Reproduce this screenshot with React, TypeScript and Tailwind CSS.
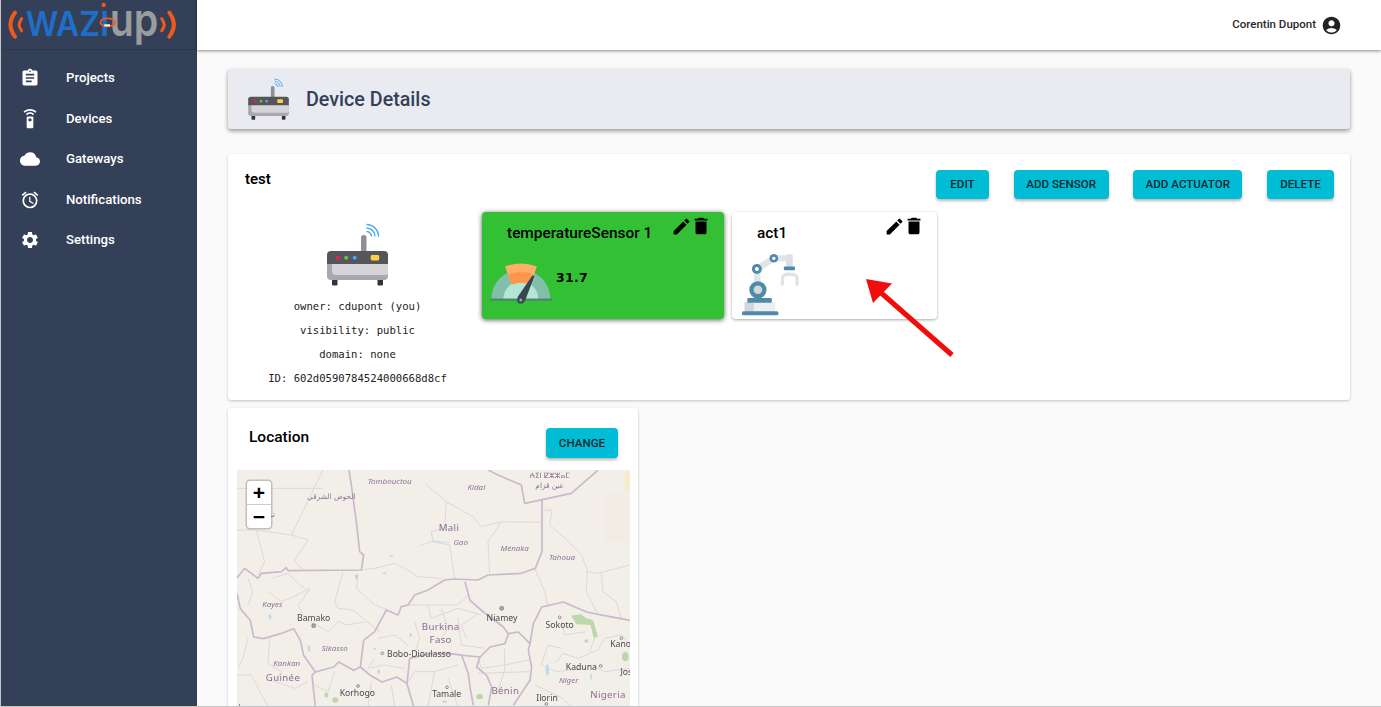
import { MdAssignment, MdSettingsRemote, MdCloud, MdAccessAlarm, MdSettings, MdAccountCircle, MdEdit, MdDelete } from "react-icons/md";

const nav = [
  { label: "Projects", Icon: MdAssignment },
  { label: "Devices", Icon: MdSettingsRemote },
  { label: "Gateways", Icon: MdCloud },
  { label: "Notifications", Icon: MdAccessAlarm },
  { label: "Settings", Icon: MdSettings },
];

function Logo() {
  return (
    <svg viewBox="0 0 540 150" width={180} height={50}>
      <g fill="none" stroke="#f0591c" strokeLinecap="round">
        <path d="M42 38C24 62 24 86 42 110" strokeWidth="12" />
        <path d="M62 56C52 68 52 80 62 92" strokeWidth="9" />
        <path d="M482 56C492 68 492 80 482 92" strokeWidth="9" />
        <path d="M505 38C523 62 523 86 505 110" strokeWidth="12" />
      </g>
      <text x="74" y="109" fontFamily="Inter, sans-serif" fontSize="103" fontWeight="600" fill="#1f6ec8" textLength="250" lengthAdjust="spacingAndGlyphs">WAZI</text>
      <text x="326" y="109" fontFamily="Inter, sans-serif" fontSize="136" fontWeight="600" fill="#9a9c9e" textLength="146" lengthAdjust="spacingAndGlyphs">up</text>
      <ellipse cx="320" cy="67" rx="22" ry="12" fill="none" stroke="#f0591c" strokeWidth="5" />
      <circle cx="308" cy="15" r="6.5" fill="#f0591c" />
      <rect x="310" y="73" width="17" height="6" fill="#fff" />
    </svg>
  );
}

function Router({ w, h }: { w: number; h: number }) {
  return (
    <svg viewBox="0 0 61 63" width={w} height={h}>
      <g fill="none" stroke="#4ea6ee" strokeWidth="1.4">
        <path d="M39.5 8.5A5 5 0 0 1 44.5 13.5" />
        <path d="M39.5 5A8.5 8.5 0 0 1 48 13.5" />
        <path d="M39.5 1.5A12 12 0 0 1 51.5 13.5" />
      </g>
      <rect x="34" y="12" width="5.5" height="18" rx="2.5" fill="#8f8f96" />
      <rect x="5" y="54" width="5.5" height="8.5" rx="1" fill="#33343a" />
      <rect x="50.5" y="54" width="5.5" height="8.5" rx="1" fill="#33343a" />
      <path d="M0 40H61V53a4 4 0 0 1-4 4H4a4 4 0 0 1-4-4Z" fill="#a8a8ae" />
      <path d="M5 40H61V50a2 2 0 0 1-2 2H9a4 4 0 0 1-4-4Z" fill="#d5d4d9" />
      <path d="M4 28H57a4 4 0 0 1 4 4V41H0V32a4 4 0 0 1 4-4Z" fill="#55555c" />
      <circle cx="10.7" cy="34.7" r="2" fill="#f0204a" />
      <circle cx="19.2" cy="34.7" r="2" fill="#6cc13c" />
      <circle cx="27.7" cy="34.7" r="2" fill="#4ea6ee" />
      <rect x="43.7" y="32" width="8.5" height="5.4" rx="1.4" fill="#ffd23e" />
    </svg>
  );
}

function Gauge() {
  return (
    <svg viewBox="30 58 185 122" width={62} height={41}>
      <path d="M34 165A88 88 0 0 1 210 165Z" fill="#82bfa9" />
      <path d="M70 165A52 52 0 0 1 174 165Z" fill="#b5e6d5" />
      <path d="M75 68Q122 50 170 68L150 122Q122 112 95 122Z" fill="#ffb066" />
      <path d="M84 92Q122 78 160 92L150 122Q122 112 95 122Z" fill="#ff964d" />
      <rect x="30" y="164" width="185" height="6" fill="#4f7f75" />
      <path d="M112 160L156 96L163 96L134 172Z" fill="#37474f" />
      <circle cx="122" cy="168" r="11" fill="#37474f" />
      <circle cx="122" cy="168" r="4.5" fill="#9aa7ab" />
    </svg>
  );
}

function Robot() {
  return (
    <svg viewBox="20 24 176 190" width={59} height={63}>
      <rect x="30" y="172" width="92" height="30" fill="#eceef1" />
      <rect x="30" y="172" width="28" height="30" fill="#d2d6da" />
      <rect x="22" y="200" width="110" height="12" rx="5" fill="#4f8ba8" />
      <rect x="38" y="160" width="74" height="14" rx="4" fill="#4f8ba8" />
      <path d="M70 135L67 72L118 40L165 40" fill="none" stroke="#e1e4e8" strokeWidth="19" strokeLinejoin="round" />
      <circle cx="70" cy="135" r="26" fill="#4f8ba8" />
      <circle cx="70" cy="135" r="13" fill="#d3d7db" />
      <circle cx="67" cy="72" r="15" fill="#4f8ba8" />
      <circle cx="67" cy="72" r="6" fill="#fff" />
      <circle cx="118" cy="40" r="13" fill="#4f8ba8" />
      <circle cx="118" cy="40" r="5" fill="#fff" />
      <rect x="155" y="28" width="20" height="38" rx="4" fill="#dcdfe3" />
      <rect x="148" y="65" width="34" height="11" rx="4" fill="#4f8ba8" />
      <path d="M144 122V100Q144 88 165 88Q188 88 188 100V122" fill="none" stroke="#e1e3e7" strokeWidth="10" />
    </svg>
  );
}

function MapArt() {
  const thick = [
    "M363 195L370 240L385 350L395 440L407 450L400 495L180 497L175 488L160 500L100 505L90 520L50 490L26 520",
    "M780 195L810 210L880 240L890 295L1030 265L1110 195",
    "M942 285L942 440L922 490L880 505L780 510L750 525L680 522L650 525L600 555L560 570L540 600L520 605L510 630L475 615L440 680L407 706L397 786L377 796L332 771L317 786L262 801L227 751L217 706L197 671L157 686L107 701L77 696L67 646L37 611L27 566",
    "M262 801L252 811L262 905",
    "M397 786L427 811L462 831L507 816L537 836L557 905",
    "M711 530L726 586L766 621L826 666L841 686L871 681L906 716L901 736L911 786L906 826L856 901",
    "M841 686L831 716L786 726L756 756L706 751L666 746L606 746L545 760L537 836",
    "M756 756L746 786L776 811L791 846L781 901",
    "M701 751L721 806L726 846L736 901",
    "M906 716L916 656L941 606L1006 591L1076 621L1126 631L1206 646",
  ];
  const thin = [
    "M285 195L190 390L240 405L200 465L225 497",
    "M26 250L285 250",
    "M26 375L85 375L110 470L90 510",
    "M85 375L190 390",
    "M590 235L655 290L650 370L610 380L615 410L665 420L680 522",
    "M655 290L735 335L760 365L820 350L942 352",
    "M820 350L780 410L785 505",
    "M610 410L665 412",
    "M945 315L972 315L965 360L1010 400L1060 450L1078 495L1075 560L1110 630",
    "M1075 500L1110 505L1205 480",
    "M1120 505L1125 560L1165 590L1180 640",
    "M920 490L950 560L960 605",
    "M400 495L440 490L500 475L530 490L570 515L640 520",
    "M345 500L320 590L330 610L375 615L430 660L455 680",
    "M390 510L385 550L440 600L480 615",
    "M205 570L245 550L220 590L210 600L230 640L300 680",
    "M300 680L330 650L360 660L410 650",
    "M540 600L600 600L690 600L720 570",
    "M600 600L610 640L690 610L760 630",
    "M560 650L575 700L560 745",
    "M690 640L700 720L770 730",
    "M1000 730L960 720L940 780L985 800L1075 790",
    "M985 770L1005 745L1050 760L1110 735L1130 700L1180 690L1205 720",
    "M920 840L1005 880L1030 905",
    "M1090 780L1130 800L1205 790",
    "M1085 640L1100 700L1085 740",
    "M905 765L830 780L760 790L750 760",
    "M750 805L905 800",
    "M830 730L830 795L810 860",
    "M260 840L300 860L320 800",
    "M125 700L120 775L160 800L140 830L200 850L240 830",
    "M26 810L70 810L120 905",
    "M60 700L45 760L30 790",
    "M540 830L560 800L620 800L690 780",
    "M440 760L420 790L470 780L530 790",
    "M620 800L600 905",
    "M660 820L690 905",
    "M130 520L180 505L215 540L245 560",
    "M60 520L75 560L60 600",
    "M120 560L160 590L210 570",
    "M450 700L500 690L540 720",
    "M640 610L660 670L640 700",
    "M745 630L700 660L715 700",
    "M1000 650L1010 690L1075 680",
    "M430 830L420 905",
    "M490 840L500 905",
  ];
  const label = { fontFamily: "'Noto Sans', sans-serif" };
  const italic = (x: number, y: number, t: string) => (
    <text x={x} y={y} textAnchor="middle" fontSize="24" fontStyle="italic" fill="#8d7494" style={label}>{t}</text>
  );
  const city = (x: number, y: number, t: string) => (
    <text x={x} y={y} textAnchor="middle" fontSize="26" fill="#4a4a4a" style={label}>{t}</text>
  );
  const region = (x: number, y: number, t: string) => (
    <text x={x} y={y} textAnchor="middle" fontSize="29" letterSpacing="1" fill="#8b6b92" style={label}>{t}</text>
  );
  return (
    <svg viewBox="0 0 393 237" className="block h-full w-full blur-[0.35px]">
      <g transform="translate(-9 -65) scale(0.33333)">
        <rect x="1125" y="265" width="80" height="145" fill="#f3ece4" />
        <rect x="1190" y="200" width="20" height="60" fill="#f6eccb" />
        <g fill="none" stroke="#dfd5d9" strokeWidth="3" strokeLinejoin="round">
          {thin.map((d) => <path key={d} d={d} />)}
        </g>
        <g fill="none" stroke="#cbb9cb" strokeWidth="5" strokeLinejoin="round">
          {thick.map((d) => <path key={d} d={d} />)}
        </g>
        <g fill="#bcd8ab">
          <path d="M1030 632L1058 628L1075 640L1095 645L1110 695L1097 698L1088 660L1045 658Z" />
          <ellipse cx="1075" cy="708" rx="6" ry="5" />
          <ellipse cx="1192" cy="755" rx="10" ry="14" />
          <ellipse cx="322" cy="885" rx="9" ry="8" />
          <ellipse cx="295" cy="870" rx="6" ry="8" />
          <ellipse cx="385" cy="515" rx="4" ry="7" />
          <ellipse cx="755" cy="875" rx="10" ry="8" />
          <ellipse cx="452" cy="800" rx="4" ry="6" />
          <ellipse cx="548" cy="690" rx="3" ry="5" />
        </g>
        <g fill="#bcdcea">
          <ellipse cx="126" cy="635" rx="4" ry="8" />
          <ellipse cx="958" cy="795" rx="5" ry="18" />
          <ellipse cx="243" cy="730" rx="4" ry="10" />
          <ellipse cx="470" cy="505" rx="6" ry="3" />
          <ellipse cx="490" cy="452" rx="5" ry="3" />
          <path d="M575 422L615 408L640 410" fill="none" stroke="#c9e1ea" strokeWidth="3" />
          <ellipse cx="1090" cy="815" rx="3" ry="9" />
          <ellipse cx="440" cy="732" rx="5" ry="3" />
          <ellipse cx="650" cy="890" rx="7" ry="4" />
        </g>
        <g fill="none" stroke="#8a8a8a" strokeWidth="3">
          <circle cx="463" cy="745" r="4" />
          <circle cx="995" cy="637" r="4" />
          <circle cx="390" cy="843" r="4" />
          <circle cx="657" cy="847" r="4" />
          <circle cx="1118" cy="783" r="4" />
          <circle cx="1180" cy="700" r="4" />
          <circle cx="955" cy="897" r="4" />
        </g>
        <circle cx="257" cy="662" r="7" fill="#8d8d8d" />
        <circle cx="257" cy="662" r="3" fill="#bbb" />
        <circle cx="821" cy="610" r="7" fill="#8d8d8d" />
        <circle cx="821" cy="610" r="3" fill="#bbb" />
        {italic(485, 236, "Tombouctou")}
        {italic(745, 254, "Kidal")}
        {italic(133, 605, "Kayes")}
        {italic(698, 420, "Gao")}
        {italic(860, 438, "Ménaka")}
        {italic(1002, 466, "Tahoua")}
        {italic(320, 738, "Sikasso")}
        {italic(176, 782, "Kankan")}
        {italic(1022, 835, "Niger")}
        <text x="310" y="282" textAnchor="middle" fontSize="22" fill="#8d7494" style={{ fontFamily: "'DejaVu Sans', sans-serif" }}>الحوض الشرقي</text>
        <text x="135" y="335" textAnchor="middle" fontSize="22" fill="#8d7494" style={{ fontFamily: "'DejaVu Sans', sans-serif" }}>تـ</text>
        <text x="965" y="218" textAnchor="middle" fontSize="22" fill="#8b6b92" style={{ fontFamily: "'DejaVu Sans', sans-serif" }}>ⵄⵉⵏ ⵇⵣⵣⴰⵎ</text>
        <text x="965" y="250" textAnchor="middle" fontSize="22" fill="#8b6b92" style={{ fontFamily: "'DejaVu Sans', sans-serif" }}>عين قزام</text>
        {region(663, 378, "Mali")}
        {region(638, 676, "Burkina")}
        {region(638, 713, "Faso")}
        {region(165, 827, "Guinée")}
        {region(832, 867, "Bénin")}
        {region(1140, 880, "Nigeria")}
        {region(75, 918, "Leone")}
        {city(257, 647, "Bamako")}
        {city(822, 647, "Niamey")}
        {city(995, 669, "Sokoto")}
        {city(573, 756, "Bobo-Dioulasso")}
        {city(388, 874, "Korhogo")}
        {city(656, 875, "Tamale")}
        {city(957, 887, "Ilorin")}
        {city(1060, 794, "Kaduna")}
        {city(1178, 727, "Kano")}
        {city(1195, 809, "Jos")}
      </g>
    </svg>
  );
}

function Btn({ label, w }: { label: string; w: string }) {
  return (
    <button className={`${w} rounded-[4px] bg-[#00bcd4] pt-[1px] text-[11.6px] font-medium text-[#0c2a33] shadow-[0_2px_3px_rgba(0,0,0,0.28)]`}>
      {label}
    </button>
  );
}

function CardActions() {
  return (
    <div className="absolute right-[12px] top-[3px] flex items-center text-black">
      <MdEdit size={21} className="mr-[-2px]" />
      <MdDelete size={22} />
    </div>
  );
}

export default function App() {
  return (
    <div className="relative flex h-[707px] w-[1381px] overflow-hidden border-b border-l border-[#c4c4c4] bg-[#fafafa] font-['Roboto',sans-serif]">
      <aside className="h-full w-[196px] shrink-0 bg-[#344058] text-white">
        <div className="h-[50px] border-b border-[#2e394f]">
          <Logo />
        </div>
        <nav className="pt-[8px]">
          {nav.map(({ label, Icon }) => (
            <div key={label} className="flex h-[40.5px] items-center text-[13.2px] font-medium">
              <div className="flex w-[65px] justify-center">
                <Icon size={20} className="ml-[-7px]" />
              </div>
              <span>{label}</span>
            </div>
          ))}
        </nav>
      </aside>
      <div className="flex min-w-0 flex-1 flex-col">
        <header className="z-10 flex h-[50px] shrink-0 items-center justify-end bg-white pr-[39px] shadow-[0_1px_3px_rgba(0,0,0,0.45)]">
          <span className="mr-[5px] text-[11.5px] font-medium text-[#2a2a2a]">Corentin Dupont</span>
          <MdAccountCircle size={21} className="text-[#222]" />
        </header>
        <main className="flex flex-col px-[31px] pt-[19px]">
          <div className="flex h-[60px] shrink-0 items-center rounded-[3px] bg-[#e9ebf0] pl-[20px] shadow-[0_2px_4px_rgba(0,0,0,0.4)]">
            <Router w={41} h={42} />
            <h1 className="ml-[17px] pt-[1px] text-[19.7px] font-medium text-[#34405a]">Device Details</h1>
          </div>
          <section className="mt-[25px] h-[246px] shrink-0 rounded-[3px] bg-white pl-[17px] pr-[16px] pt-[16px] shadow-[0_1px_3px_rgba(0,0,0,0.22)]">
            <div className="flex h-[42px] items-start justify-between">
              <h2 className="text-[15px] font-semibold leading-[18px] text-black">test</h2>
              <div className="flex h-[29px] gap-[24.7px]">
                <Btn label="EDIT" w="w-[53px]" />
                <Btn label="ADD SENSOR" w="w-[95px]" />
                <Btn label="ADD ACTUATOR" w="w-[109px]" />
                <Btn label="DELETE" w="w-[67px]" />
              </div>
            </div>
            <div className="flex">
              <div className="flex w-[225px] flex-col items-center pt-[11px] font-['DejaVu_Sans_Mono',monospace] text-[10.6px] text-[#222]">
                <Router w={61} h={63} />
                <p className="mt-[8px] leading-[24px]">owner: cdupont (you)</p>
                <p className="leading-[24px]">visibility: public</p>
                <p className="leading-[24px]">domain: none</p>
                <p className="leading-[25px]">ID: 602d0590784524000668d8cf</p>
              </div>
              <div className="ml-[12px] flex items-start gap-[8px]">
                <article className="relative h-[107px] w-[242px] rounded-[4px] bg-[#34c035] shadow-[0_1px_5px_rgba(0,0,0,0.65)]">
                  <CardActions />
                  <h3 className="pl-[25px] pt-[12px] text-[15.4px] font-medium leading-[18px] text-black">temperatureSensor 1</h3>
                  <div className="mt-[21px] flex items-start pl-[8px]">
                    <Gauge />
                    <span className="ml-[4px] mt-[6px] font-['DejaVu_Sans',sans-serif] text-[12.5px] font-bold tracking-[0.3px] text-black">31.7</span>
                  </div>
                </article>
                <article className="relative h-[107px] w-[205px] rounded-[4px] bg-white shadow-[0_1px_3px_rgba(0,0,0,0.35)]">
                  <CardActions />
                  <h3 className="pl-[25px] pt-[12px] text-[15.4px] font-medium leading-[18px] text-black">act1</h3>
                  <div className="mt-[11px] pl-[9px]">
                    <Robot />
                  </div>
                </article>
              </div>
            </div>
          </section>
          <section className="mt-[8px] w-[410px] shrink-0 rounded-[3px] bg-white pt-[20px] shadow-[0_1px_3px_rgba(0,0,0,0.22)]">
            <div className="flex h-[42px] items-start justify-between pl-[21px] pr-[20px]">
              <h2 className="text-[15.5px] font-medium leading-[18px] text-black">Location</h2>
              <div className="flex h-[30px]">
                <Btn label="CHANGE" w="w-[72px]" />
              </div>
            </div>
            <div className="relative ml-[9px] mr-[8px] h-[237px] overflow-hidden bg-[#f2efe9]">
              <MapArt />
              <div className="absolute left-[10px] top-[11px] flex w-[24px] flex-col overflow-hidden rounded-[3px] bg-white text-black shadow-[0_0_0_1.5px_rgba(0,0,0,0.2)]">
                <div className="flex h-[24px] items-center justify-center border-b border-[#ccc] font-['Liberation_Sans',sans-serif] text-[21px] font-bold leading-none">+</div>
                <div className="flex h-[23px] items-center justify-center font-['Liberation_Sans',sans-serif] text-[21px] font-bold leading-none">−</div>
              </div>
            </div>
          </section>
        </main>
      </div>
      <svg viewBox="0 0 100 90" width={100} height={90} className="pointer-events-none absolute left-[859px] top-[274px]">
        <path d="M92 81L19 17" stroke="#f30c0c" strokeWidth="5" />
        <path d="M6 5L32 9.5L13 29Z" fill="#f30c0c" />
      </svg>
    </div>
  );
}
